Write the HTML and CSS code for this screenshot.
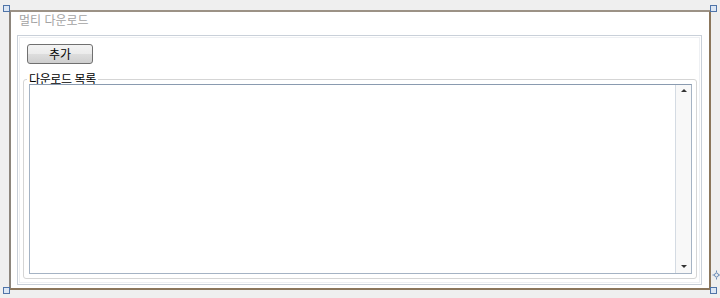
FILE: index.html
```html
<!DOCTYPE html>
<html lang="ko">
<head>
    <meta charset="UTF-8">
    <title>멀티 다운로드</title>
    <link rel="stylesheet" href="styles.css">
</head>
<body>
    <div class="surface">
        <div class="form">
            <div class="form-title">멀티 다운로드</div>
            <div class="panel">
                <button class="btn">추가</button>
                <fieldset class="group">
                    <legend>다운로드 목록</legend>
                    <div class="listbox">
                        <div class="list-items"></div>
                        <div class="scrollbar">
                            <span class="arrow up"></span>
                            <span class="arrow down"></span>
                        </div>
                    </div>
                </fieldset>
            </div>
        </div>
        <span class="handle tl"></span>
        <span class="handle tr"></span>
        <span class="handle bl"></span>
        <span class="handle br"></span>
        <svg class="anchor" width="8" height="10" viewBox="0 0 8 10">
            <circle cx="4.5" cy="5" r="2" fill="none" stroke="#6b8cb8" stroke-width="1"/>
            <path d="M4.5 0.5v2M4.5 7.5v2M0.5 5h2M6.5 5h1.5" stroke="#6b8cb8" stroke-width="1"/>
        </svg>
    </div>
</body>
</html>
```

FILE: styles.css
```css
body {
    margin: 0;
    background-color: #efefef;
    font-family: "Noto Sans CJK KR", "Noto Sans", sans-serif;
    font-size: 12px;
}
.surface {
    position: relative;
    width: 720px;
    height: 298px;
    padding: 10px 0 0 9px;
    box-sizing: border-box;
}
.form {
    width: 702px;
    height: 280px;
    box-sizing: border-box;
    background: #fff;
    border-top: 2px solid #9c9286;
    border-left: 2px solid #8c857c;
    border-right: 2px solid #8b765c;
    border-bottom: 2px solid #8b765c;
    display: flex;
    flex-direction: column;
}
.form-title {
    height: 23px;
    line-height: 14px;
    padding: 1px 0 0 8px;
    box-sizing: border-box;
    color: #a3a3a3;
    font-size: 12px;
}
.panel {
    flex: 1;
    margin: 0 7px 3px 6px;
    border: 1px solid #c9d0d9;
    box-shadow: inset 0 0 0 1px #fff, inset 0 0 0 2px #eef0f3;
    padding: 8px 4px 5px 5px;
    display: flex;
    flex-direction: column;
}
.btn {
    width: 66px;
    height: 20px;
    margin-left: 4px;
    padding: 0;
    border: 1px solid #707070;
    border-radius: 3px;
    background: linear-gradient(#f3f3f3, #ebebeb 50%, #dddddd 51%, #cfcfcf);
    font-family: inherit;
    font-size: 12px;
    line-height: 16px;
    color: #000;
}
.group {
    flex: 1;
    margin: 9px 0 0 0;
    padding: 0 4px 4px 5px;
    border: 1px solid #d5d5d5;
    border-radius: 3px;
    display: flex;
    flex-direction: column;
    min-height: 0;
}
.group legend {
    padding: 0 2px;
    margin-left: -2px;
    line-height: 12px;
    letter-spacing: -0.4px;
    color: #000;
}
.listbox {
    flex: 1;
    margin-top: -1px;
    border: 1px solid #a5b3c4;
    border-top-color: #8a9bb0;
    display: flex;
    background: #fff;
}
.list-items {
    flex: 1;
}
.scrollbar {
    width: 15px;
    border-left: 1px solid #d4dbe3;
    background: #f8f8f8;
    display: flex;
    flex-direction: column;
    justify-content: space-between;
    align-items: center;
    padding: 4px 0 5px;
}
.arrow {
    width: 0;
    height: 0;
    border-left: 3px solid transparent;
    border-right: 3px solid transparent;
}
.arrow.up {
    border-bottom: 3px solid #333;
}
.arrow.down {
    border-top: 3px solid #333;
}
.handle {
    position: absolute;
    width: 5px;
    height: 5px;
    border: 1px solid #4f74a8;
    background: #dbe6f4;
}
.handle.tl { left: 3px; top: 5px; }
.handle.tr { left: 710px; top: 5px; }
.handle.bl { left: 3px; top: 287px; }
.handle.br { left: 710px; top: 287px; }
.anchor {
    position: absolute;
    left: 712px;
    top: 270px;
}
```
